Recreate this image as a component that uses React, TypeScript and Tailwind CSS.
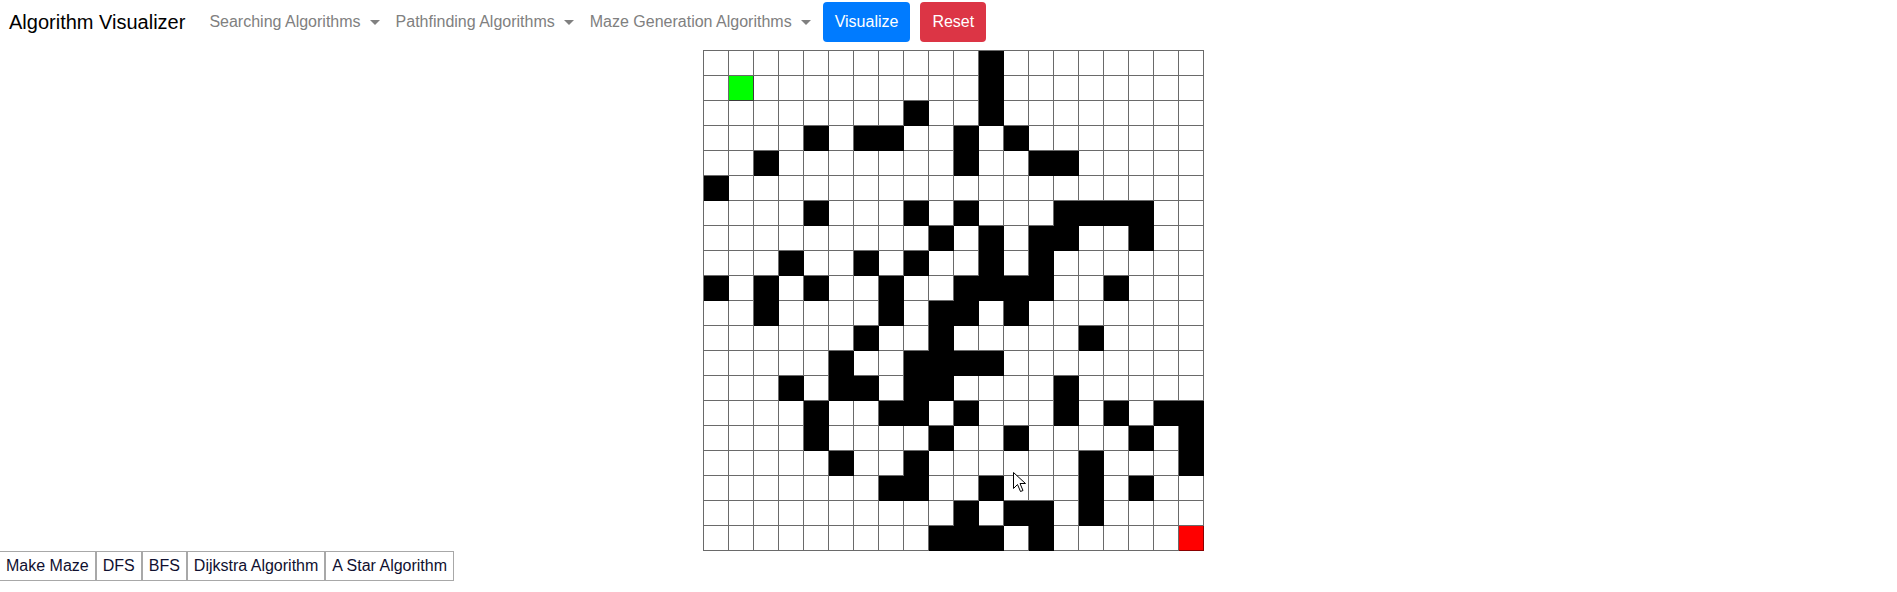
import React from 'react';

const WALLS: Record<number, number[]> = {
  0: [11],
  1: [11],
  2: [8, 11],
  3: [4, 6, 7, 10, 12],
  4: [2, 10, 13, 14],
  5: [0],
  6: [4, 8, 10, 14, 15, 16, 17],
  7: [9, 11, 13, 14, 17],
  8: [3, 6, 8, 11, 13],
  9: [0, 2, 4, 7, 10, 11, 12, 13, 16],
  10: [2, 7, 9, 10, 12],
  11: [6, 9, 15],
  12: [5, 8, 9, 10, 11],
  13: [3, 5, 6, 8, 9, 14],
  14: [4, 7, 8, 10, 14, 16, 18, 19],
  15: [4, 9, 12, 17, 19],
  16: [5, 8, 15, 19],
  17: [7, 8, 11, 15, 17],
  18: [10, 12, 13, 15],
  19: [9, 10, 11, 13],
};

const START = { r: 1, c: 1 };
const END = { r: 19, c: 19 };

const NAV_LINKS = ['Searching Algorithms', 'Pathfinding Algorithms', 'Maze Generation Algorithms'];
const BOTTOM_BUTTONS = ['Make Maze', 'DFS', 'BFS', 'Dijkstra Algorithm', 'A Star Algorithm'];

function Caret() {
  return (
    <span className="ml-[9px] inline-block h-0 w-0 border-x-[5px] border-t-[5px] border-x-transparent border-t-[#808080] align-middle" />
  );
}

function Cell({ r, c }: { r: number; c: number }) {
  let tone = 'bg-white border-[#6a6a6a]';
  if (WALLS[r]?.includes(c)) tone = 'bg-black border-black';
  else if (r === START.r && c === START.c) tone = 'bg-[#00ff00] border-[#3a3a3a]';
  else if (r === END.r && c === END.c) tone = 'bg-[#ff0000] border-[#8a0000]';
  return <div className={`h-[25px] w-[25px] border-r border-b ${tone}`} />;
}

export default function App() {
  const rows = Array.from({ length: 20 }, (_, r) => r);
  const cols = Array.from({ length: 20 }, (_, c) => c);

  return (
    <div className="relative min-h-[592px] bg-white font-['Liberation_Sans',Arial,sans-serif] text-[#212529]">
      <nav className="flex h-[44px] items-center pl-[9px]">
        <span className="mr-[16px] text-[20px] leading-[30px] text-black">Algorithm Visualizer</span>
        <ul className="flex items-center">
          {NAV_LINKS.map((label) => (
            <li key={label} className="flex items-center px-[8px] text-[16px] leading-[24px] text-[#808080]">
              {label}
              <Caret />
            </li>
          ))}
        </ul>
        <button className="ml-[4px] h-[40px] rounded-[4px] bg-[#007bff] px-[12px] text-[16px] text-white">
          Visualize
        </button>
        <button className="ml-[10px] h-[40px] rounded-[4px] bg-[#dc3545] px-[12px] text-[16px] text-white">
          Reset
        </button>
      </nav>

      <div className="mt-[6px] flex justify-center pl-[9px]">
        <div className="border-t border-l border-[#6a6a6a]">
          {rows.map((r) => (
            <div key={r} className="flex">
              {cols.map((c) => (
                <Cell key={c} r={r} c={c} />
              ))}
            </div>
          ))}
        </div>
      </div>

      <div className="-ml-[1px] flex">
        {BOTTOM_BUTTONS.map((label) => (
          <button
            key={label}
            className="h-[30px] border border-[#a8a8a8] bg-white px-[6px] text-[16px] leading-[20px] text-[#101030]"
          >
            {label}
          </button>
        ))}
      </div>

      {/* mouse pointer left on the grid */}
      <svg className="absolute left-[1013px] top-[472px]" width="13" height="21" viewBox="0 0 13 21">
        <path d="M0.5 0.5 L0.5 16.5 L4.5 12.5 L7.5 19.5 L10 18.5 L7 11.5 L12.5 11.5 Z" fill="white" stroke="black" strokeWidth="1" />
      </svg>
    </div>
  );
}
